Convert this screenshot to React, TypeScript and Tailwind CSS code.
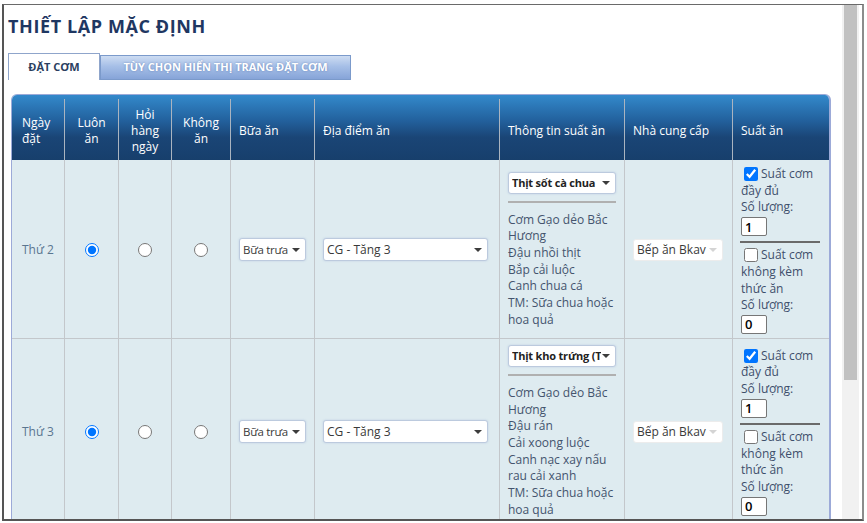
import React from 'react';
import clsx from 'clsx';

const GRID = 'grid grid-cols-[53px_54px_53px_59px_84px_185px_125px_108px_96px]';

type Day = {
  day: string;
  dish: string;
  lines: string[];
};

const DAYS: Day[] = [
  {
    day: 'Thứ 2',
    dish: 'Thịt sốt cà chua',
    lines: ['Cơm Gạo dẻo Bắc', 'Hương', 'Đậu nhồi thịt', 'Bắp cải luộc', 'Canh chua cá', 'TM: Sữa chua hoặc', 'hoa quả'],
  },
  {
    day: 'Thứ 3',
    dish: 'Thịt kho trứng (Thịt lợn)',
    lines: ['Cơm Gạo dẻo Bắc', 'Hương', 'Đậu rán', 'Cải xoong luộc', 'Canh nạc xay nấu', 'rau cải xanh', 'TM: Sữa chua hoặc', 'hoa quả'],
  },
];

function Caret({ light }: { light?: boolean }) {
  return (
    <span
      className={clsx(
        'w-0 h-0 shrink-0 border-x-[4px] border-x-transparent border-t-[4px]',
        light ? 'border-t-[#d4d4d4]' : 'border-t-[#3c3c3c]'
      )}
    />
  );
}

function FakeSelect({
  text,
  width,
  bold,
  disabled,
  height = 'h-[23px]',
  size = 'text-[12px]',
}: {
  text: string;
  width: string;
  bold?: boolean;
  disabled?: boolean;
  height?: string;
  size?: string;
}) {
  return (
    <div
      className={clsx(
        'flex items-center bg-white border rounded-[3px] pl-[3px] pr-[5px] gap-[1px]',
        width,
        height,
        disabled ? 'border-[#ececec]' : 'border-[#bccade] shadow-[0_0_2px_rgba(120,150,200,0.35)]'
      )}
    >
      <span
        className={clsx(
          'flex-1 overflow-hidden whitespace-nowrap leading-[16px]',
          size,
          bold ? 'font-bold text-[#222]' : 'text-[#3a3a3a]'
        )}
      >
        {text}
      </span>
      <Caret light={disabled} />
    </div>
  );
}

function Th({ children, center, first, last }: { children: React.ReactNode; center?: boolean; first?: boolean; last?: boolean }) {
  return (
    <div
      className={clsx(
        'mt-[4px] pt-[8px] pb-[5px] flex items-center text-white text-[12px] leading-[16px]',
        center ? 'justify-center text-center' : first ? 'pl-[10px]' : 'pl-[8px]',
        !last && 'border-r border-[#aab4c0]'
      )}
    >
      <div>{children}</div>
    </div>
  );
}

function Td({ children, center, first, last }: { children: React.ReactNode; center?: boolean; first?: boolean; last?: boolean }) {
  return (
    <div
      className={clsx(
        'flex items-center pt-[6px] pb-[4px]',
        center ? 'justify-center' : first ? 'pl-[10px]' : 'pl-[8px]',
        !last && 'border-r border-[#c3c7cb]'
      )}
    >
      {children}
    </div>
  );
}

function Qty({ value }: { value: string }) {
  return (
    <input
      readOnly
      value={value}
      className="block mt-[1px] w-[26px] h-[19px] border border-[#767676] rounded-[2px] bg-white px-[3px] text-[13px] font-semibold text-black outline-none"
    />
  );
}

function PortionCell() {
  return (
    <div className="text-[12px] leading-[16.7px] text-[#3e4f6c]">
      <div className="flex items-center">
        <input type="checkbox" defaultChecked className="w-[14px] h-[14px] m-0 ml-[3px] mr-[3px]" />
        <span>Suất cơm</span>
      </div>
      <div>đầy đủ</div>
      <div>Số lượng:</div>
      <Qty value="1" />
      <div className="-ml-[1px] w-[80px] h-[2px] bg-[#6a6a6a] mt-[5px] mb-[4px]" />
      <div className="flex items-center">
        <input type="checkbox" className="w-[14px] h-[14px] m-0 ml-[3px] mr-[3px]" />
        <span>Suất cơm</span>
      </div>
      <div>không kèm</div>
      <div>thức ăn</div>
      <div>Số lượng:</div>
      <Qty value="0" />
    </div>
  );
}

function Row({ d, idx }: { d: Day; idx: number }) {
  const name = 'opt' + idx;
  return (
    <div className={clsx(GRID, 'bg-[#deebf0] border-b border-[#c3c7cb]')}>
      <Td first>
        <span className="text-[12px] text-[#5a7690]">{d.day}</span>
      </Td>
      <Td center>
        <input type="radio" name={name} defaultChecked className="w-[14px] h-[14px] m-0" />
      </Td>
      <Td center>
        <input type="radio" name={name} className="w-[14px] h-[14px] m-0" />
      </Td>
      <Td center>
        <input type="radio" name={name} className="w-[14px] h-[14px] m-0" />
      </Td>
      <Td>
        <FakeSelect text="Bữa trưa" width="w-[67px]" size="text-[11.5px] tracking-[-0.3px]" />
      </Td>
      <Td>
        <FakeSelect text="CG - Tăng 3" width="w-[165px]" />
      </Td>
      <Td>
        <div className="w-[108px]">
          <FakeSelect text={d.dish} width="w-[108px]" height="h-[22px]" size="text-[11px] tracking-[-0.2px]" bold />
          <div className="h-[2px] bg-[#b0b0b0] mt-[7px] mb-[9px]" />
          <div className="text-[12px] leading-[16.7px] text-[#44546e] whitespace-nowrap">
            {d.lines.map((l) => (
              <div key={l}>{l}</div>
            ))}
          </div>
        </div>
      </Td>
      <Td>
        <FakeSelect text="Bếp ăn Bkav (Tầng 3)" width="w-[90px]" height="h-[22px]" disabled />
      </Td>
      <Td last>
        <PortionCell />
      </Td>
    </div>
  );
}

export default function App() {
  return (
    <div className="w-[867px] h-[523px] bg-white overflow-hidden font-['Open_Sans','Noto_Sans',sans-serif]">
      <div className="ml-[2px] mt-[4px] w-[862px] h-[517px] border-t border-t-[#6a6a6a] border-l-2 border-l-[#555] border-r-2 border-r-[#8c8c8c] border-b-2 border-b-[#555] flex overflow-hidden">
        {/* page content */}
        <div className="w-[838px] shrink-0 overflow-hidden">
          <h1 className="pl-[4px] pt-[9px] text-[18px] leading-[24px] font-bold tracking-[0.6px] text-[#1f3762]">THIẾT LẬP MẶC ĐỊNH</h1>

          <div className="mt-[15px] ml-[4px] flex items-end h-[27px]">
            <div className="h-[27px] w-[92px] border border-b-0 border-[#8fa5cb] bg-white flex items-center justify-center text-[11px] font-bold text-[#2b3f5f]">
              ĐẶT CƠM
            </div>
            <div className="h-[25px] w-[251px] border border-[#7b9acb] bg-[linear-gradient(to_bottom,#cddcf2,#a6bfe7_45%,#86a4d8)] flex items-center justify-center text-[11px] font-bold text-white [text-shadow:0_0_2px_rgba(60,90,150,0.6)]">
              TÙY CHỌN HIỂN THỊ TRANG ĐẶT CƠM
            </div>
          </div>

          <div className="mt-[14px] ml-[7px] w-[820px] rounded-t-[6px] border-t border-l border-r-2 border-[#9caad8] overflow-hidden">
            <div className={clsx(GRID, 'bg-[linear-gradient(to_bottom,#3389cb,#22609c_40%,#1a4576_65%,#173f6c)]')}>
              <Th first>
                Ngày
                <br />
                đặt
              </Th>
              <Th center>
                Luôn
                <br />
                ăn
              </Th>
              <Th center>
                Hỏi
                <br />
                hàng
                <br />
                ngày
              </Th>
              <Th center>
                Không
                <br />
                ăn
              </Th>
              <Th>Bữa ăn</Th>
              <Th>Địa điểm ăn</Th>
              <Th>Thông tin suất ăn</Th>
              <Th>Nhà cung cấp</Th>
              <Th last>Suất ăn</Th>
            </div>
            {DAYS.map((d, i) => (
              <Row key={d.day} d={d} idx={i} />
            ))}
          </div>
        </div>

        {/* scrollbar */}
        <div className="w-[17px] shrink-0 bg-[#f1f1f1] pl-[2px] pr-[2px]">
          <div className="h-[375px] bg-[#c1c1c1]" />
        </div>
        <div className="w-[3px] shrink-0 bg-white" />
      </div>
    </div>
  );
}
